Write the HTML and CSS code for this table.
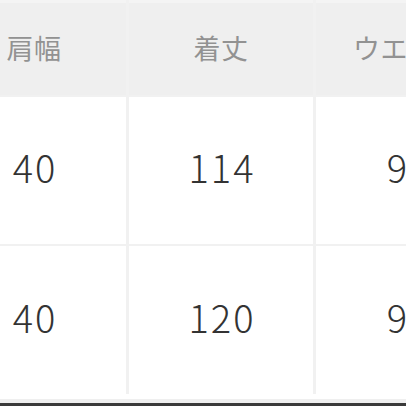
FILE: index.html
```html
<!DOCTYPE html>
<html lang="ja">
<head>
<meta charset="utf-8">
<link rel="stylesheet" href="styles.css">
</head>
<body>
<div class="viewport">
  <div class="table">
    <div class="cell head">肩幅</div>
    <div class="cell head">着丈</div>
    <div class="cell head">ウエスト</div>
    <div class="cell num">40</div>
    <div class="cell num">114</div>
    <div class="cell num">96</div>
    <div class="cell num">40</div>
    <div class="cell num">120</div>
    <div class="cell num">96</div>
  </div>
  <div class="footer"></div>
</div>
</body>
</html>
```
FILE: styles.css
```css
html, body {
  margin: 0;
  padding: 0;
  background: #ffffff;
}
.viewport {
  width: 406px;
  height: 406px;
  overflow: hidden;
  display: flex;
  flex-direction: column;
}
.table {
  margin-left: -58px;
  width: 600px;
  display: grid;
  grid-template-columns: 184px 184px 184px;
  grid-template-rows: 95px 147px 148px;
  column-gap: 3px;
  row-gap: 2px;
  background: #f1f1f1;
  font-family: "Noto Sans CJK JP", sans-serif;
}
.cell {
  display: flex;
  align-items: center;
  justify-content: center;
  background: #ffffff;
  box-sizing: border-box;
}
.head {
  background: #efefef;
  color: #929292;
  font-size: 27px;
  letter-spacing: 0.5px;
  border-top: 3px solid #f4f4f4;
  padding-bottom: 4px;
}
.num {
  color: #333333;
  font-size: 38px;
  font-weight: 300;
  letter-spacing: 2px;
  padding-left: 2px;
  padding-bottom: 8px;
}
.footer {
  height: 8px;
  background: #efefef;
  margin-top: 5px;
  border-bottom: 3px solid #3a3a3a;
}
```
